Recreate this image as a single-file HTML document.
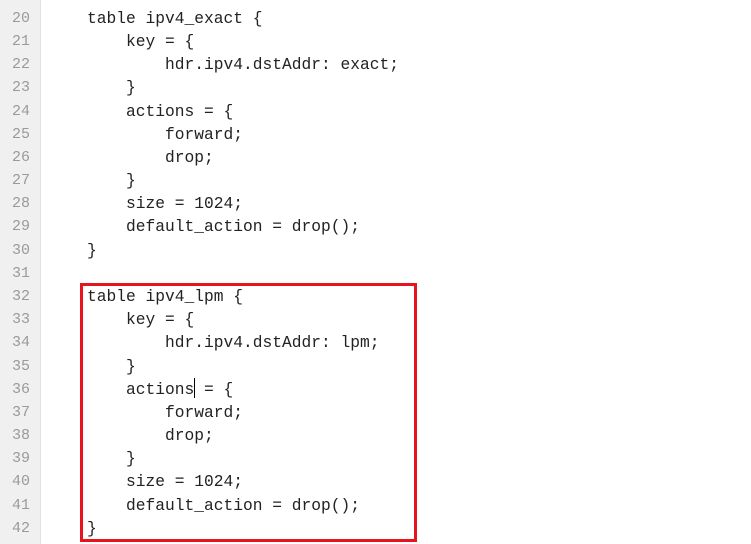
<!DOCTYPE html><html><head><style>
body{margin:0;width:751px;height:544px;overflow:hidden;background:#fff;position:relative;font-family:"Liberation Mono",monospace;font-size:16.25px;}
.g{position:absolute;left:0;top:0;width:40px;height:544px;background:#f0f0f0;border-right:1px solid #e2e2e2;}
.l{position:absolute;height:23.18px;line-height:23.18px;white-space:pre;}
.n{left:0;width:30px;text-align:right;color:#9a9a9a;font-size:15px;}
.c{left:87px;color:#222;}
.box{position:absolute;left:80px;top:283px;width:331px;height:253px;border:3px solid #e8141d;}
.cur{position:absolute;left:194px;top:378px;width:1px;height:20px;background:#000;}
</style></head><body>
<div class="g"></div>
<div id="w"></div>
<div class="box"></div>
<div class="cur"></div>
<script>
var L=["","table ipv4_exact {","    key = {","        hdr.ipv4.dstAddr: exact;","    }","    actions = {","        forward;","        drop;","    }","    size = 1024;","    default_action = drop();","}","","table ipv4_lpm {","    key = {","        hdr.ipv4.dstAddr: lpm;","    }","    actions = {","        forward;","        drop;","    }","    size = 1024;","    default_action = drop();","}"];
var h="";for(var i=0;i<L.length;i++){var t=6.4+(i-1)*23.18-11.6+12;h+='<div class="l n" style="top:'+t+'px">'+(19+i)+'</div><div class="l c" style="top:'+t+'px">'+L[i]+'</div>';}
document.getElementById("w").innerHTML=h;
</script>
</body></html>
